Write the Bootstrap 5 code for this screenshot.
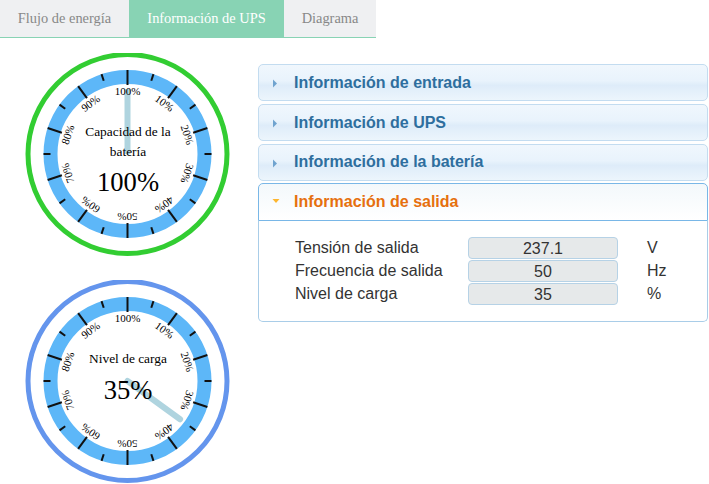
<!DOCTYPE html>
<html lang="es">
<head>
<meta charset="utf-8">
<title>UPS</title>
<link href="https://cdn.jsdelivr.net/npm/bootstrap@5.3.0/dist/css/bootstrap.min.css" rel="stylesheet">
<style>
html,body{background:#fff;overflow:hidden}
.ups-tabs{width:376px;height:38px;border-bottom:1px solid #88d3b4;font:14.4px "Liberation Serif",serif}
.ups-tab{height:37px;line-height:36px;text-align:center;background:#eff0f2;color:#888}
.ups-tab.on{background:#88d3b4;color:#fff}
.t1{width:129px}.t2{width:155px}.t3{width:92px}
.ups-main{padding-top:15px}
.gauge-col{width:258px;flex:none}
.gauge-svg{display:block;width:258px;height:227px}
.acc-col{width:450px;padding-top:11px}
.acc-h{height:37px;margin-bottom:3px;border:1px solid #c3dcf0;border-radius:5px;background:linear-gradient(#f0f7fd 0,#e9f3fc 45%,#deecf9 58%,#ecf5fc 100%);color:#2e6e9e;font:bold 16px/35px "Liberation Sans",sans-serif;padding-left:35px;position:relative}
.acc-h svg{position:absolute;left:13px;top:14px}
.acc-h.tight{margin-bottom:2px;line-height:34px}
.acc-h.open{margin:0;height:38px;line-height:35px;border-color:#79b7e7;border-radius:5px 5px 0 0;background:linear-gradient(#f3f8fb,#fff);color:#e6700e}
.acc-b{height:101px;border:1px solid #a9cde8;border-top:0;border-radius:0 0 5px 5px;padding:16px 0 0 36px;font:16px/22px "Liberation Sans",sans-serif;color:#333}
.v-lab{width:173px}
.v-box{width:150px;height:22px;margin-bottom:1px;line-height:21px;text-align:center;background:#e6e9ea;border:1px solid #b6d2e6;border-radius:4px}
.v-unit{margin-left:29px}
.g-t{font-family:"Liberation Serif",serif;fill:#000;text-anchor:middle}
.g-l{font-size:11px}
.g-c{font-size:13.4px}
.g-v{font-size:26.6px}
.g-tick line{stroke:#111;stroke-width:2}
</style>
</head>
<body>
<div class="ups-tabs d-flex">
  <div class="ups-tab t1">Flujo de energía</div>
  <div class="ups-tab t2 on">Información de UPS</div>
  <div class="ups-tab t3">Diagrama</div>
</div>
<div class="ups-main d-flex">
  <div class="gauge-col">
    <svg class="gauge-svg" viewBox="0 0 258 227" aria-label="Capacidad de la batería">
      <defs>
        <g id="ticks" class="g-tick">
          <line x1="0" y1="-84" x2="0" y2="-69"/>
          <line x1="0" y1="-84" x2="0" y2="-77" transform="rotate(18)"/>
          <line x1="0" y1="-84" x2="0" y2="-69" transform="rotate(36)"/>
          <line x1="0" y1="-84" x2="0" y2="-77" transform="rotate(54)"/>
          <line x1="0" y1="-84" x2="0" y2="-69" transform="rotate(72)"/>
          <line x1="0" y1="-84" x2="0" y2="-77" transform="rotate(90)"/>
          <line x1="0" y1="-84" x2="0" y2="-69" transform="rotate(108)"/>
          <line x1="0" y1="-84" x2="0" y2="-77" transform="rotate(126)"/>
          <line x1="0" y1="-84" x2="0" y2="-69" transform="rotate(144)"/>
          <line x1="0" y1="-84" x2="0" y2="-77" transform="rotate(162)"/>
          <line x1="0" y1="-84" x2="0" y2="-69" transform="rotate(180)"/>
          <line x1="0" y1="-84" x2="0" y2="-77" transform="rotate(198)"/>
          <line x1="0" y1="-84" x2="0" y2="-69" transform="rotate(216)"/>
          <line x1="0" y1="-84" x2="0" y2="-77" transform="rotate(234)"/>
          <line x1="0" y1="-84" x2="0" y2="-69" transform="rotate(252)"/>
          <line x1="0" y1="-84" x2="0" y2="-77" transform="rotate(270)"/>
          <line x1="0" y1="-84" x2="0" y2="-69" transform="rotate(288)"/>
          <line x1="0" y1="-84" x2="0" y2="-77" transform="rotate(306)"/>
          <line x1="0" y1="-84" x2="0" y2="-69" transform="rotate(324)"/>
          <line x1="0" y1="-84" x2="0" y2="-77" transform="rotate(342)"/>
        </g>
      </defs>
      <g transform="translate(127.5 101)">
        <circle r="99.5" fill="#fff" stroke="#32cd32" stroke-width="5"/>
        <circle r="77" fill="none" stroke="#5db7f8" stroke-width="14"/>
        <use href="#ticks"/>
        <line x1="0" y1="0" x2="0" y2="-65" stroke="#afd4df" stroke-width="6"/>
        <g class="g-t g-l">
          <text y="-59">100%</text>
          <text y="-59" transform="rotate(36)">10%</text>
          <text y="-59" transform="rotate(72)">20%</text>
          <text y="-59" transform="rotate(108)">30%</text>
          <text y="-59" transform="rotate(144)">40%</text>
          <text y="-59" transform="rotate(180)">50%</text>
          <text y="-59" transform="rotate(216)">60%</text>
          <text y="-59" transform="rotate(252)">70%</text>
          <text y="-59" transform="rotate(288)">80%</text>
          <text y="-59" transform="rotate(324)">90%</text>
        </g>
        <text class="g-t g-c" x="0.5" y="-18">Capacidad de la</text>
        <text class="g-t g-c" x="0.5" y="2">batería</text>
        <text class="g-t g-v" x="0.5" y="37">100%</text>
      </g>
    </svg>
    <svg class="gauge-svg" viewBox="0 0 258 227" aria-label="Nivel de carga">
      <g transform="translate(127.5 101)">
        <circle r="99.5" fill="#fff" stroke="#6495ed" stroke-width="5"/>
        <circle r="77" fill="none" stroke="#5db7f8" stroke-width="14"/>
        <use href="#ticks"/>
        <line x1="0" y1="0" x2="0" y2="-65" stroke="#afd4df" stroke-width="6" stroke-linecap="round" transform="rotate(126)"/>
        <g class="g-t g-l">
          <text y="-59">100%</text>
          <text y="-59" transform="rotate(36)">10%</text>
          <text y="-59" transform="rotate(72)">20%</text>
          <text y="-59" transform="rotate(108)">30%</text>
          <text y="-59" transform="rotate(144)">40%</text>
          <text y="-59" transform="rotate(180)">50%</text>
          <text y="-59" transform="rotate(216)">60%</text>
          <text y="-59" transform="rotate(252)">70%</text>
          <text y="-59" transform="rotate(288)">80%</text>
          <text y="-59" transform="rotate(324)">90%</text>
        </g>
        <text class="g-t g-c" x="0.5" y="-18">Nivel de carga</text>
        <text class="g-t g-v" x="0.5" y="18">35%</text>
      </g>
    </svg>
  </div>
  <div class="acc-col">
    <div class="acc-h"><svg width="6" height="9" viewBox="0 0 6 9"><path d="M1 0.5 5 4.5 1 8.5Z" fill="#6fa3cf"/></svg>Información de entrada</div>
    <div class="acc-h"><svg width="6" height="9" viewBox="0 0 6 9"><path d="M1 0.5 5 4.5 1 8.5Z" fill="#6fa3cf"/></svg>Información de UPS</div>
    <div class="acc-h tight"><svg width="6" height="9" viewBox="0 0 6 9"><path d="M1 0.5 5 4.5 1 8.5Z" fill="#6fa3cf"/></svg>Información de la batería</div>
    <div class="acc-h open"><svg width="8" height="6" viewBox="0 0 8 6"><path d="M0.500 1H7.500L4 5Z" fill="#fdb62f"/></svg>Información de salida</div>
    <div class="acc-b">
      <div class="d-flex"><div class="v-lab">Tensión de salida</div><div class="v-box">237.1</div><div class="v-unit">V</div></div>
      <div class="d-flex"><div class="v-lab">Frecuencia de salida</div><div class="v-box">50</div><div class="v-unit">Hz</div></div>
      <div class="d-flex"><div class="v-lab">Nivel de carga</div><div class="v-box">35</div><div class="v-unit">%</div></div>
    </div>
  </div>
</div>
<script src="https://cdn.jsdelivr.net/npm/bootstrap@5.3.0/dist/js/bootstrap.bundle.min.js"></script>
</body>
</html>
